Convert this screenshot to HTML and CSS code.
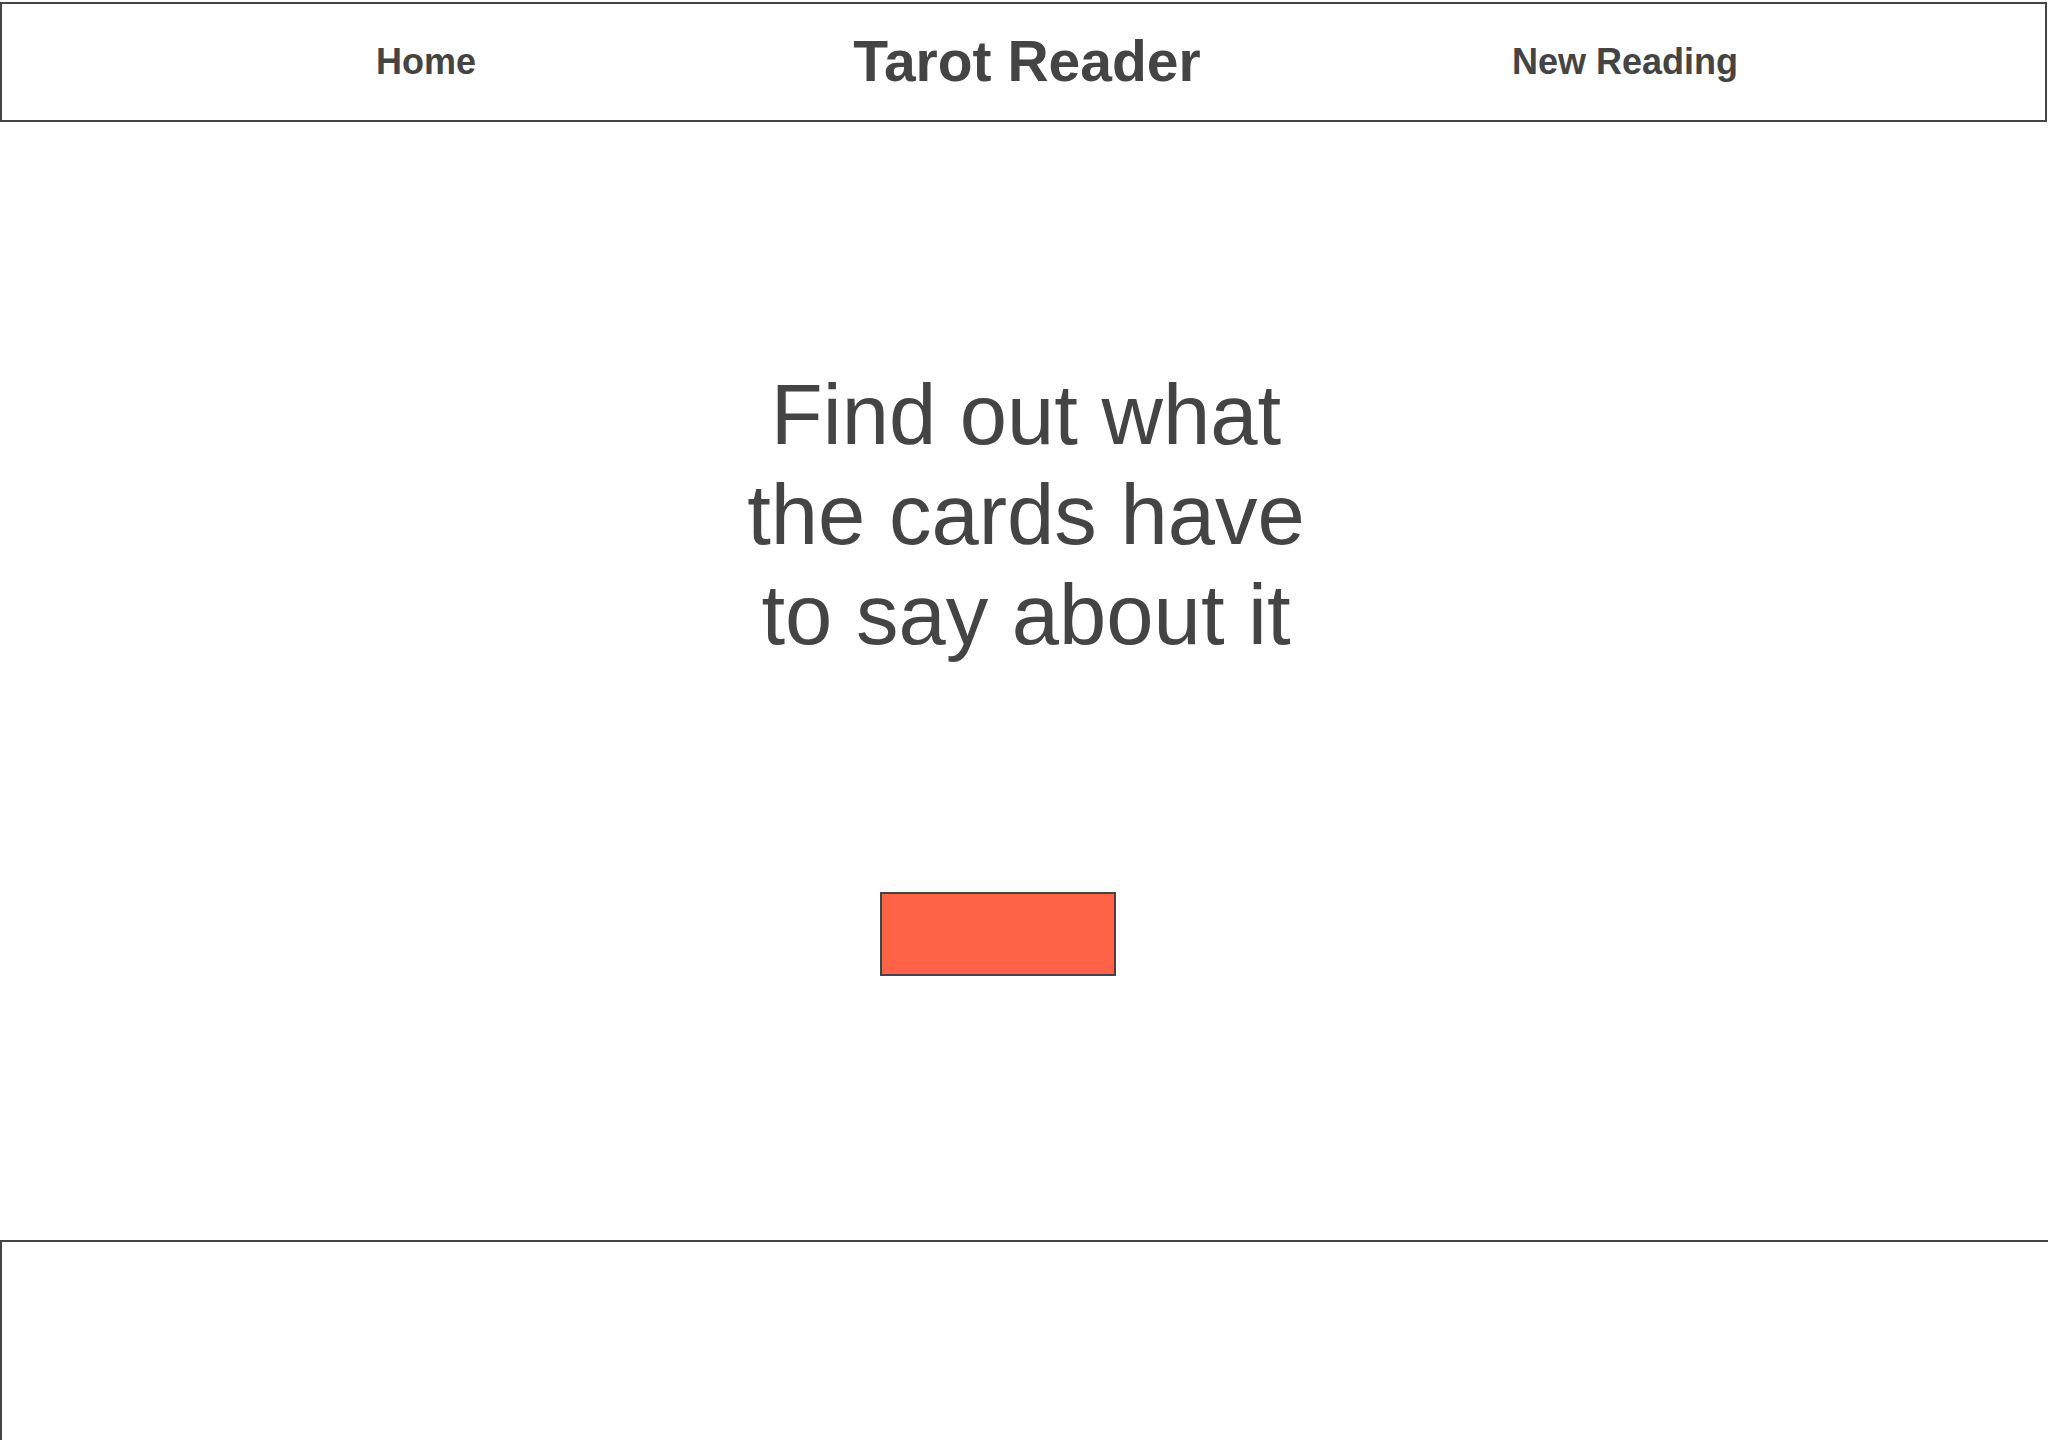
FILE: index.html
```html
<!DOCTYPE html>
<html lang="en">
<head>
<meta charset="utf-8">
<title>Tarot Reader</title>
<link rel="stylesheet" href="styles.css">
</head>
<body>
<header class="site-header">
  <nav class="nav">
    <a class="nav-link" href="#">Home</a>
    <div class="brand">Tarot Reader</div>
    <a class="nav-link nav-link-wide" href="#">New Reading</a>
  </nav>
</header>
<main class="hero">
  <h1 class="hero-title">Find out what<br>the cards have<br>to say about it</h1>
  <button class="cta" type="button"></button>
</main>
<footer class="site-footer"></footer>
</body>
</html>
```
FILE: styles.css
```css
html, body {
  margin: 0;
  padding: 0;
  background: #ffffff;
  overflow: hidden;
}
body {
  width: 2048px;
  height: 1440px;
  font-family: "Liberation Sans", Arial, sans-serif;
  color: #444444;
}
.site-header {
  box-sizing: border-box;
  margin-top: 2px;
  width: 2047px;
  height: 120px;
  border: 2px solid #444444;
  display: flex;
  align-items: center;
}
.nav {
  width: 1800px;
  margin-left: 124px;
  display: grid;
  grid-template-columns: repeat(3, 1fr);
  align-items: center;
  justify-items: center;
}
.nav-link {
  font-size: 36px;
  line-height: 36px;
  font-weight: 700;
  color: #444444;
  text-decoration: none;
}
.nav-link-wide {
  padding-right: 2px;
}
.brand {
  font-size: 57px;
  line-height: 56px;
  font-weight: 700;
  margin-bottom: 3px;
  padding-left: 2px;
}
.hero {
  display: flex;
  flex-direction: column;
  height: 1118px;
}
.hero-title {
  margin: 243px 0 0 0;
  padding-left: 4px;
  font-size: 85px;
  line-height: 100px;
  font-weight: 400;
  text-align: center;
}
.cta {
  box-sizing: border-box;
  margin: 227px 0 0 880px;
  width: 236px;
  height: 84px;
  padding: 0;
  background: #ff6347;
  border: 2px solid #444444;
  border-radius: 0;
}
.site-footer {
  box-sizing: border-box;
  width: 2048px;
  height: 200px;
  border-top: 2px solid #444444;
  border-left: 2px solid #444444;
}
```
